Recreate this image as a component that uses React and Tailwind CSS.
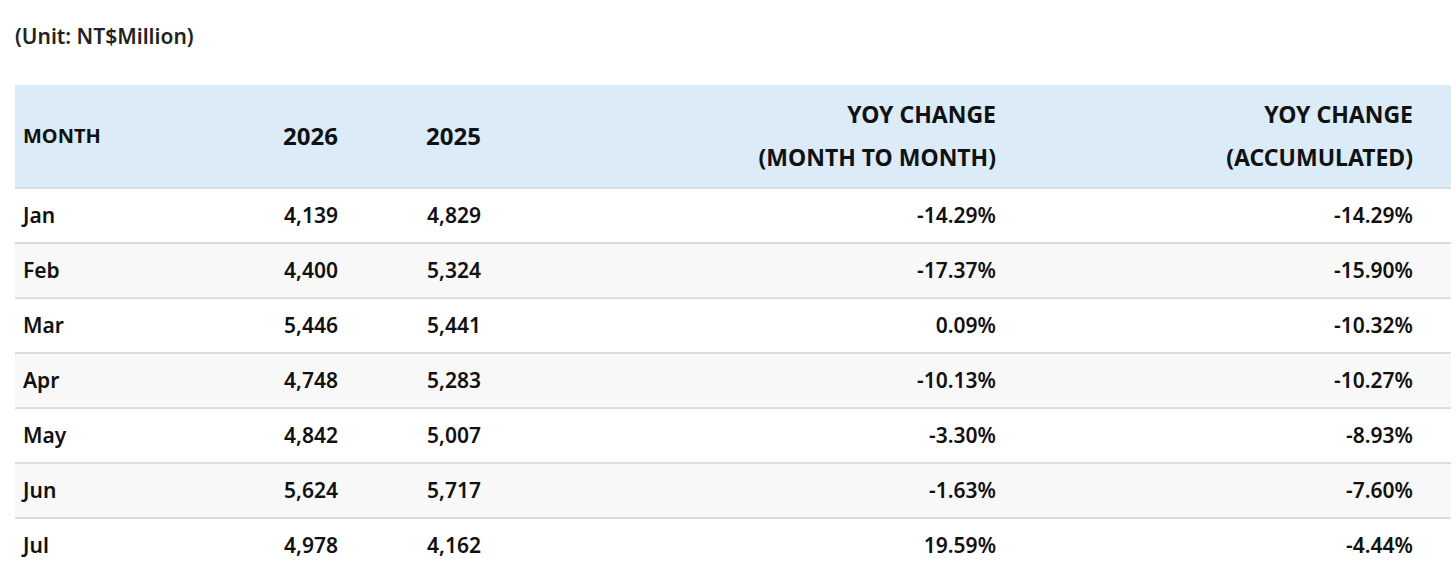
const rows = [
  ["Jan", "4,139", "4,829", "-14.29%", "-14.29%"],
  ["Feb", "4,400", "5,324", "-17.37%", "-15.90%"],
  ["Mar", "5,446", "5,441", "0.09%", "-10.32%"],
  ["Apr", "4,748", "5,283", "-10.13%", "-10.27%"],
  ["May", "4,842", "5,007", "-3.30%", "-8.93%"],
  ["Jun", "5,624", "5,717", "-1.63%", "-7.60%"],
  ["Jul", "4,978", "4,162", "19.59%", "-4.44%"],
]

const cols = "grid grid-cols-[218px_143px_143px_515px_1fr]"

export default function App() {
  return (
    <div
      className="bg-white text-[#111] px-[15px] pt-[21px] font-semibold"
      style={{ fontFamily: '"Source Sans Pro", "Noto Sans", sans-serif' }}
    >
      <p className="text-[21px] leading-[30px] mb-[34px] text-[#222]">(Unit: NT$Million)</p>

      <div className="w-[1436px]">
        <div className={`${cols} bg-[#dbecf8] h-[104px] items-center border-b-2 border-[#dcdcdc] text-[#111]`}>
          <div className="pl-2 text-[20px] font-bold">MONTH</div>
          <div className="text-right pr-[38px] text-[24px] font-bold">2026</div>
          <div className="text-right pr-[38px] text-[24px] font-bold">2025</div>
          <div className="text-right pr-[38px] text-[23px] font-bold leading-[43px]">
            YOY CHANGE
            <br />
            (MONTH TO MONTH)
          </div>
          <div className="text-right pr-[38px] text-[23px] font-bold leading-[43px]">
            YOY CHANGE
            <br />
            (ACCUMULATED)
          </div>
        </div>

        {rows.map((r, i) => (
          <div
            key={r[0]}
            className={`${cols} h-[55px] items-center text-[21px] border-b-2 border-[#dddddd] ${i % 2 === 1 ? "bg-[#f8f8f8]" : "bg-white"}`}
          >
            <div className="pl-2">{r[0]}</div>
            <div className="text-right pr-[38px]">{r[1]}</div>
            <div className="text-right pr-[38px]">{r[2]}</div>
            <div className="text-right pr-[38px]">{r[3]}</div>
            <div className="text-right pr-[38px]">{r[4]}</div>
          </div>
        ))}
      </div>
    </div>
  )
}
